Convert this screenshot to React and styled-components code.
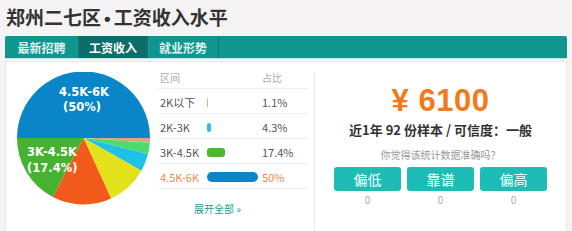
import React from 'react';
import styled, { createGlobalStyle } from 'styled-components';

const GlobalStyle = createGlobalStyle`
  html, body {
    margin: 0;
    padding: 0;
    background: #f6f3f5;
  }
  body {
    font-family: "Noto Sans CJK SC", "Noto Sans", sans-serif;
    color: #333;
  }
`;

const Page = styled.div`
  width: 572px;
  height: 231px;
  padding: 3px 5px 0 5px;
  box-sizing: border-box;
  overflow: hidden;
`;

const Title = styled.h1`
  margin: 0;
  height: 33px;
  line-height: 28px;
  font-size: 19px;
  font-weight: 700;
  color: #333;
  padding-left: 1px;
`;

const Dot = styled.span`
  font-family: "Liberation Sans", Arial, sans-serif;
  margin: 0 3px;
`;

const TabBar = styled.div`
  display: flex;
  height: 22px;
  background: #10968f;
  border-radius: 2px 2px 0 0;
  box-shadow: 0 1px 0 #bfe7e5;
`;

const Tab = styled.div`
  display: flex;
  align-items: center;
  justify-content: center;
  width: ${p => p.$w}px;
  font-size: 12px;
  font-weight: 700;
  color: ${p => (p.$active ? '#ffffff' : '#dff3f1')};
  background: ${p => (p.$active ? '#0c6e6a' : 'transparent')};
  border-right: 1px solid #0c7c77;
`;

const Panel = styled.div`
  margin-top: 3px;
  height: 180px;
  background: #fff;
  border: 1px solid #ebe8ea;
  display: flex;
`;

const PieBox = styled.div`
  width: 152px;
  padding: 10px 0 0 11px;
  box-sizing: border-box;
`;

const Table = styled.div`
  width: 150px;
  padding-top: 5px;
`;

const Row = styled.div`
  display: grid;
  grid-template-columns: 47px 55px 1fr;
  align-items: center;
  height: ${p => (p.$head ? 22 : 25)}px;
  padding-top: ${p => (p.$head ? 0 : 2)}px;
  border-bottom: 1px solid #efefef;
  box-sizing: border-box;
  padding-left: 2px;
  font-size: ${p => (p.$head ? 10 : 11)}px;
  color: ${p => (p.$head ? '#aaa' : p.$hot ? '#f0894a' : '#555')};
`;

const Bar = styled.span`
  display: block;
  width: ${p => p.$w}px;
  height: ${p => p.$h}px;
  border-radius: ${p => p.$r}px;
  background: ${p => p.$c};
`;

const More = styled.div`
  margin: 12px 0 0 36px;
  font-size: 10px;
  color: #1a9e8f;
`;

const Right = styled.div`
  flex: 1;
  margin: 9px 0 8px 6px;
  border-left: 1px solid #ececec;
  display: flex;
  flex-direction: column;
  align-items: center;
`;

const Price = styled.div`
  margin-top: 12px;
  font-family: "Liberation Sans", Arial, sans-serif;
  font-size: 31px;
  font-weight: 700;
  color: #f27a1a;
  line-height: 36px;
  letter-spacing: 0.5px;
`;

const Sample = styled.div`
  margin-top: 2px;
  font-size: 13px;
  font-weight: 700;
  color: #333;
  line-height: 18px;
`;

const Ask = styled.div`
  margin-top: 10px;
  font-size: 10px;
  color: #999;
  line-height: 12px;
`;

const Votes = styled.div`
  display: flex;
  gap: 6px;
  margin-top: 6px;
`;

const Vote = styled.div`
  display: flex;
  flex-direction: column;
  align-items: center;
`;

const VoteButton = styled.div`
  width: 67px;
  height: 24px;
  border-radius: 3px;
  background: #1dbdb6;
  color: #fff;
  font-size: 14px;
  line-height: 24px;
  text-align: center;
`;

const Count = styled.div`
  font-size: 10px;
  color: #aaa;
  margin-top: 1px;
`;

// slices in degrees, clockwise from 9 o'clock
const slices = [
  { c: '#0a86c8', a: 180 },
  { c: '#e4a37a', a: 4 },
  { c: '#4ddb6e', a: 10 },
  { c: '#1fc1e6', a: 15.5 },
  { c: '#e2e11a', a: 36 },
  { c: '#f25a1c', a: 52 },
  { c: '#47b230', a: 62.5 },
];

function Pie() {
  const r = 66.5;
  const cx = 66.5;
  const cy = 66;
  let start = 180;
  const paths = slices.map((s, i) => {
    const a0 = (start * Math.PI) / 180;
    const a1 = ((start + s.a) * Math.PI) / 180;
    start += s.a;
    const x0 = cx + r * Math.cos(a0);
    const y0 = cy + r * Math.sin(a0);
    const x1 = cx + r * Math.cos(a1);
    const y1 = cy + r * Math.sin(a1);
    const large = s.a > 180 ? 1 : 0;
    return (
      <path
        key={i}
        d={`M${cx},${cy} L${x0},${y0} A${r},${r} 0 ${large} 1 ${x1},${y1} Z`}
        fill={s.c}
      />
    );
  });
  const label = {
    fill: '#fff',
    fontFamily: '"DejaVu Sans", sans-serif',
    fontWeight: 700,
    fontSize: 11.5,
  };
  return (
    <svg width="134" height="134" viewBox="0 0 134 134">
      {paths}
      <text x="42" y="24" style={label}>4.5K-6K</text>
      <text x="46" y="39" style={label}>(50%)</text>
      <text x="10" y="84" style={label}>3K-4.5K</text>
      <text x="10" y="100" style={label}>(17.4%)</text>
    </svg>
  );
}

const rows = [
  { name: '2K以下', bar: { w: 1, h: 9, r: 0, c: '#e3b585' }, pct: '1.1%' },
  { name: '2K-3K', bar: { w: 4, h: 9, r: 2, c: '#2bbfe3' }, pct: '4.3%' },
  { name: '3K-4.5K', bar: { w: 18, h: 9, r: 3, c: '#4db531' }, pct: '17.4%' },
  { name: '4.5K-6K', bar: { w: 51, h: 10, r: 5, c: '#0a86c6' }, pct: '50%', hot: true },
];

export default function App() {
  return (
    <Page>
      <GlobalStyle />
      <Title>郑州二七区<Dot>•</Dot>工资收入水平</Title>
      <TabBar>
        <Tab $w={73}>最新招聘</Tab>
        <Tab $w={68} $active>工资收入</Tab>
        <Tab $w={70}>就业形势</Tab>
      </TabBar>
      <Panel>
        <PieBox>
          <Pie />
        </PieBox>
        <Table>
          <Row $head>
            <span>区间</span>
            <span />
            <span>占比</span>
          </Row>
          {rows.map(r => (
            <Row key={r.name} $hot={r.hot}>
              <span>{r.name}</span>
              <Bar $w={r.bar.w} $h={r.bar.h} $r={r.bar.r} $c={r.bar.c} />
              <span>{r.pct}</span>
            </Row>
          ))}
          <More>展开全部 »</More>
        </Table>
        <Right>
          <Price>¥ 6100</Price>
          <Sample>近1年 92 份样本 / 可信度：一般</Sample>
          <Ask>你觉得该统计数据准确吗？</Ask>
          <Votes>
            {['偏低', '靠谱', '偏高'].map(v => (
              <Vote key={v}>
                <VoteButton>{v}</VoteButton>
                <Count>0</Count>
              </Vote>
            ))}
          </Votes>
        </Right>
      </Panel>
    </Page>
  );
}
